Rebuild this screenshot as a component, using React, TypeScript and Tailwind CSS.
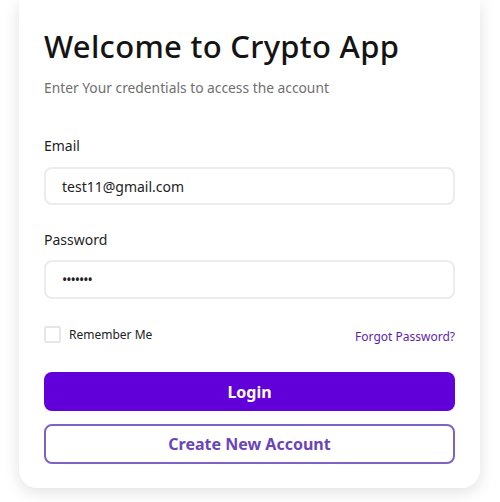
import React from "react";

export default function App() {
  return (
    <div className="w-[500px] h-[502px] bg-white overflow-hidden" style={{ fontFamily: '"Noto Sans", "Open Sans", sans-serif' }}>
      <div className="ml-[19px] w-[461px] h-[488px] bg-white rounded-b-[18px] shadow-[0_4px_16px_rgba(0,0,0,0.12)] px-[25px] pt-[23px] flex flex-col">
        <h1 className="text-[31px] leading-[46px] font-medium text-[#141414] tracking-[0.3px]">Welcome to Crypto App</h1>
        <p className="mt-[9px] text-[13.8px] leading-[20px] text-[#6f6f6f]">Enter Your credentials to access the account</p>

        <label className="mt-[38px] text-[14px] leading-[20px] text-[#1f1f1f]">Email</label>
        <div className="mt-[11px] h-[38px] rounded-[8px] border-2 border-[#ebebf0] flex items-center pl-[16px] text-[14px] text-[#222]">test11@gmail.com</div>

        <label className="mt-[25px] text-[14px] leading-[20px] text-[#1f1f1f]">Password</label>
        <div className="mt-[10px] h-[39px] rounded-[8px] border-2 border-[#ebebf0] flex items-center pl-[16px] text-[14px] text-[#222] tracking-[-1px]">•••••••</div>

        <div className="mt-[27px] flex items-start justify-between">
          <div className="flex items-center gap-[8px]">
            <div className="w-[17px] h-[17px] border-2 border-[#e6e6e6] rounded-[2px]" />
            <span className="text-[12px] leading-[16px] text-[#222]">Remember Me</span>
          </div>
          <span className="mt-[3px] text-[12px] leading-[16px] text-[#5b1fb0]">Forgot Password?</span>
        </div>

        <button className="mt-[27px] h-[39px] rounded-[8px] bg-[#6200d9] text-white text-[16px] font-bold">Login</button>
        <button className="mt-[13px] h-[40px] rounded-[8px] border-2 border-[#7e62c6] bg-white text-[#6a45b8] text-[16px] font-bold">Create New Account</button>
      </div>
    </div>
  );
}
